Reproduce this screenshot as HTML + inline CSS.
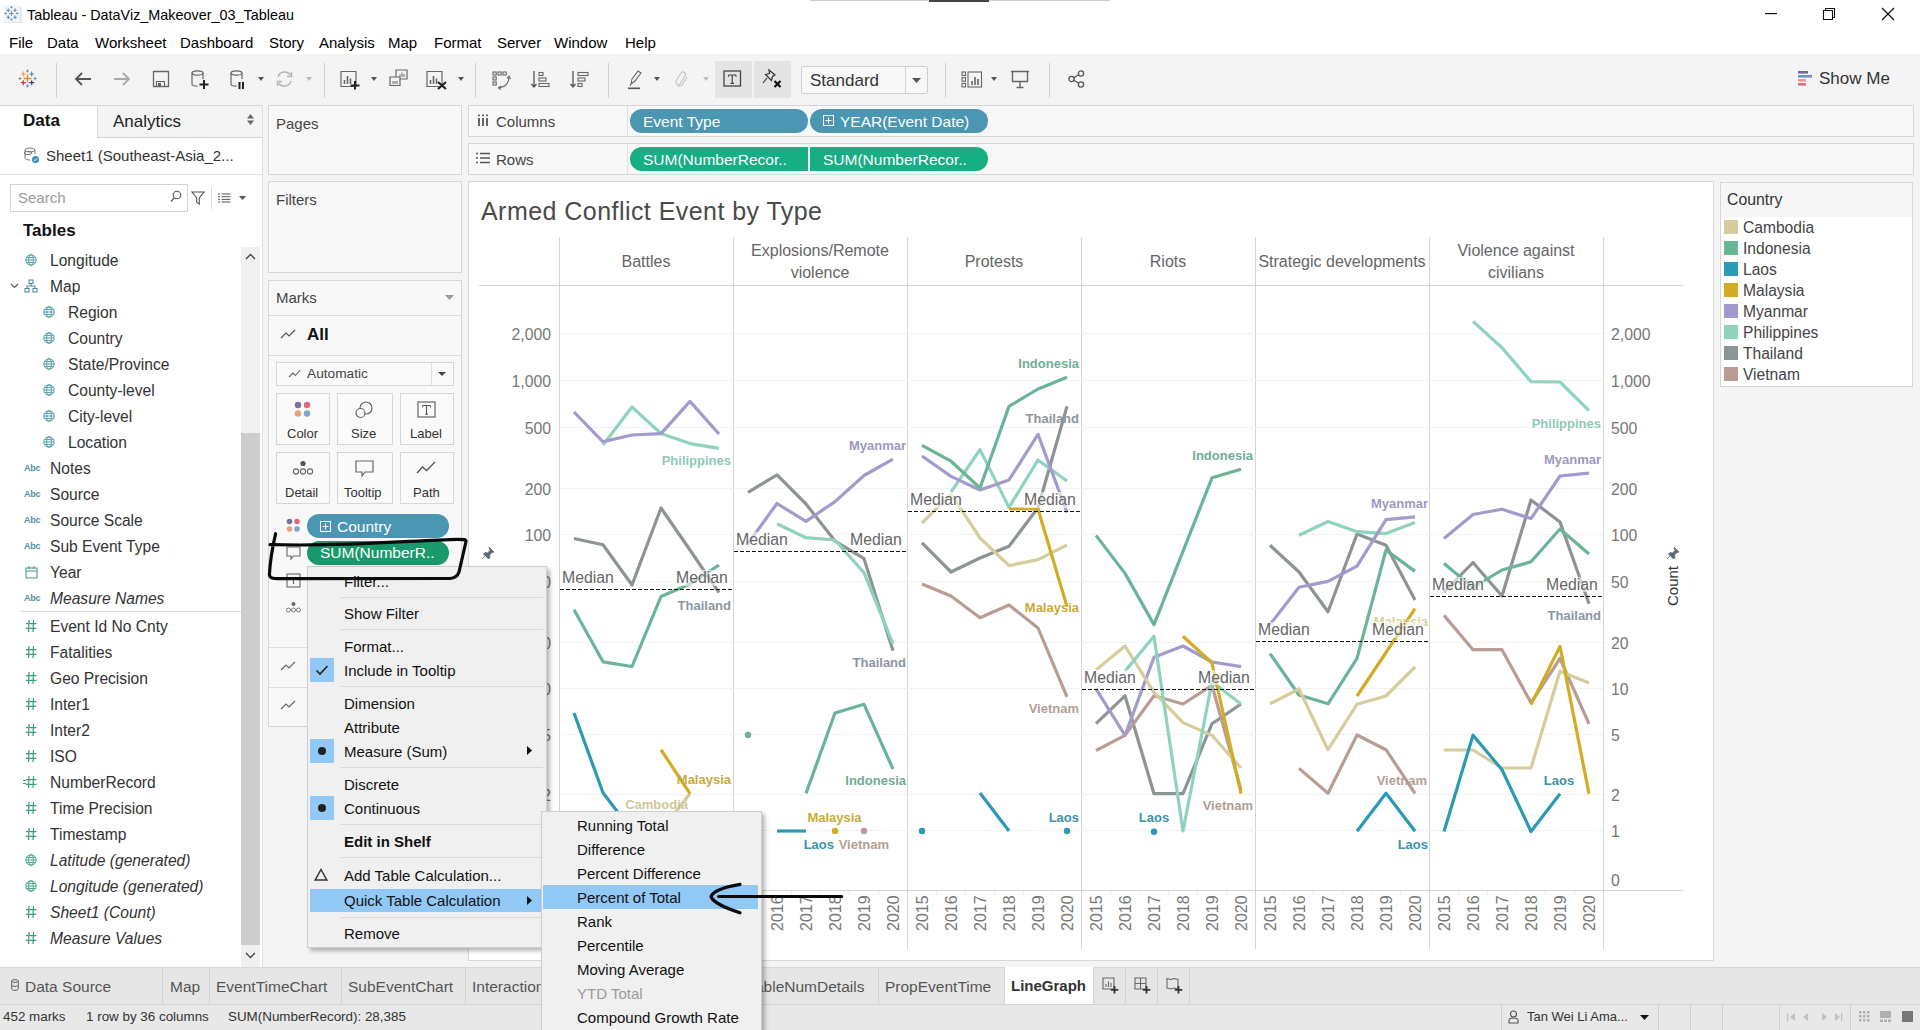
<!DOCTYPE html>
<html><head><meta charset="utf-8">
<style>
*{margin:0;padding:0;box-sizing:border-box;}
html,body{width:1920px;height:1030px;overflow:hidden;background:#f4f4f4;font-family:"Liberation Sans",sans-serif;color:#1a1a1a;}
.a{position:absolute;white-space:nowrap;}
.t{position:absolute;white-space:nowrap;line-height:1;}
svg{position:absolute;overflow:visible;}
.menu .t{font-size:15px;color:#000;}
.fld{font-size:15.6px;color:#333;}
.card{position:absolute;background:#f8f8f8;border:1px solid #d6d6d6;}
.pill{position:absolute;color:#fff;font-size:15px;line-height:23px;height:23px;}
.mi{position:absolute;font-size:15px;color:#111;line-height:1;}
.sep{position:absolute;height:1px;background:#d9d9d9;}
.ax{font-size:15.8px;color:#777;}
.yr{font-size:16px;color:#777;transform-origin:0 0;}
.lbl{font-size:13px;font-weight:bold;}
.tab{position:absolute;top:965px;height:40px;border-right:1px solid #d4d4d4;font-size:15.5px;color:#555;line-height:40px;}
</style></head><body>
<!-- title bar -->
<div class="a" style="left:0;top:0;width:1920px;height:54px;background:#fff;"></div>
<div class="a" style="left:810px;top:0;width:300px;height:1px;background:#d0d0d0;"></div>
<div class="a" style="left:929px;top:0;width:60px;height:2px;background:#444;"></div>
<svg style="left:3px;top:5px" width="20" height="20" viewBox="0 0 20 20">
<rect x="1.5" y="1.5" width="17" height="16.5" fill="#d4d4d4"/>
<rect x="0.5" y="0.5" width="17" height="17" fill="#f1f6fa"/>
<g stroke="#6690ab">
<path d="M8.4 6v4.8M6 8.4h4.8" stroke-width="1"/>
<path d="M5.3 3.5v3.6M3.5 5.3h3.6M12 3.5v3.6M10.2 5.3h3.6M5.3 10.4v3.6M3.5 12.2h3.6M12 10.4v3.6M10.2 12.2h3.6" stroke-width="1.1"/>
<path d="M8.4 1.2v2.2M7.3 2.3h2.2M8.4 13.4v2.2M7.3 14.5h2.2M1.5 8.4h2.2M2.6 7.3v2.2M13.1 8.4h2.2M14.2 7.3v2.2" stroke-width="1"/>
</g></svg>
<div class="t" style="left:27px;top:8px;font-size:14.4px;color:#000;">Tableau - DataViz_Makeover_03_Tableau</div>
<svg style="left:1765px;top:13px" width="12" height="2"><rect width="12" height="1.2" fill="#111"/></svg>
<svg style="left:1822px;top:7px" width="14" height="14" viewBox="0 0 14 14"><path d="M1.5 3.5h9v9h-9z M3.5 3.5v-2h9v9h-2" fill="none" stroke="#111" stroke-width="1.1"/></svg>
<svg style="left:1881px;top:7px" width="14" height="14" viewBox="0 0 14 14"><path d="M1 1L13 13M13 1L1 13" stroke="#111" stroke-width="1.2"/></svg>
<!-- menu -->
<div class="menu">
<div class="t" style="left:9px;top:35px;">File</div>
<div class="t" style="left:47px;top:35px;">Data</div>
<div class="t" style="left:95px;top:35px;">Worksheet</div>
<div class="t" style="left:180px;top:35px;">Dashboard</div>
<div class="t" style="left:269px;top:35px;">Story</div>
<div class="t" style="left:319px;top:35px;">Analysis</div>
<div class="t" style="left:388px;top:35px;">Map</div>
<div class="t" style="left:434px;top:35px;">Format</div>
<div class="t" style="left:497px;top:35px;">Server</div>
<div class="t" style="left:554px;top:35px;">Window</div>
<div class="t" style="left:625px;top:35px;">Help</div>
</div>
<!-- toolbar -->
<div class="a" style="left:0;top:54px;width:1920px;height:51px;background:#f4f4f4;"></div>
<div class="a" style="left:0;top:105px;width:262px;height:1px;background:#d6d6d6;"></div>
<svg style="left:17px;top:68px" width="22" height="22" viewBox="0 0 22 22">
<path d="M10.5 6.5v8M6.5 10.5h8" stroke="#e98a35" stroke-width="1.5"/>
<path d="M6.3 3.5v5M3.8 6h5" stroke="#eba54a" stroke-width="1.2"/>
<path d="M14.7 3.5v5M12.2 6h5" stroke="#5a8fa0" stroke-width="1.2"/>
<path d="M6.3 12.2v5M3.8 14.7h5" stroke="#c8344f" stroke-width="1.2"/>
<path d="M14.7 12.2v5M12.2 14.7h5" stroke="#27477a" stroke-width="1.2"/>
<path d="M10.5 1.5v3M9 3h3M10.5 16.5v3M9 18h3M1.5 10.5h3M3 9v3M16.5 10.5h3M18 9v3" stroke="#7a8fa3" stroke-width="1"/>
</svg>
<div class="a" style="left:56px;top:63px;width:1px;height:35px;background:#cfcfcf;"></div>
<svg style="left:74px;top:71px" width="18" height="16" viewBox="0 0 18 16"><path d="M17 8H2M8 2L2 8l6 6" fill="none" stroke="#555" stroke-width="1.8"/></svg>
<svg style="left:113px;top:71px" width="18" height="16" viewBox="0 0 18 16"><path d="M1 8h15M10 2l6 6-6 6" fill="none" stroke="#aaa" stroke-width="1.8"/></svg>
<svg style="left:152px;top:70px" width="18" height="18" viewBox="0 0 18 18"><path d="M1.5 1.5h15v15h-15z" fill="none" stroke="#666" stroke-width="1.3"/><path d="M4.5 16.5v-5h8v5" fill="none" stroke="#666" stroke-width="1.2"/><rect x="6" y="13" width="3" height="3" fill="#666"/></svg>
<svg style="left:191px;top:70px" width="18" height="20" viewBox="0 0 18 20"><ellipse cx="6.5" cy="3" rx="5.5" ry="2.2" fill="none" stroke="#666" stroke-width="1.2"/><path d="M1 3v11c0 1.2 2.5 2.2 5.5 2.2M12 3v6" fill="none" stroke="#666" stroke-width="1.2"/><path d="M13 10v9M8.5 14.5h9" stroke="#222" stroke-width="2"/></svg>
<svg style="left:230px;top:70px" width="16" height="20" viewBox="0 0 16 20"><ellipse cx="6.5" cy="3" rx="5.5" ry="2.2" fill="none" stroke="#666" stroke-width="1.2"/><path d="M1 3v11c0 1.2 2.5 2.2 5.5 2.2M12 3v6" fill="none" stroke="#666" stroke-width="1.2"/><path d="M9.5 12v7M13 12v7" stroke="#222" stroke-width="2"/></svg>
<svg style="left:258px;top:77px" width="6" height="4"><path d="M0 0h6L3 4z" fill="#555"/></svg>
<svg style="left:275px;top:70px" width="19" height="18" viewBox="0 0 19 18"><path d="M3 7a7 7 0 0 1 12.5-2M16 11a7 7 0 0 1-12.5 2" fill="none" stroke="#b5b5b5" stroke-width="1.4"/><path d="M16.5 2v4.5H12M2.5 16v-4.5H7" fill="none" stroke="#b5b5b5" stroke-width="1.4"/></svg>
<svg style="left:306px;top:77px" width="6" height="4"><path d="M0 0h6L3 4z" fill="#bbb"/></svg>
<div class="a" style="left:324px;top:63px;width:1px;height:35px;background:#cfcfcf;"></div>
<svg style="left:340px;top:70px" width="20" height="20" viewBox="0 0 20 20"><path d="M1 1.5h15v15H1z" fill="none" stroke="#666" stroke-width="1.2"/><path d="M4.5 14V10M7.5 14V6M10.5 14V8.5" stroke="#666" stroke-width="1.6"/><path d="M15 11v8.5M10.5 15.5h9" stroke="#222" stroke-width="2"/></svg>
<svg style="left:371px;top:77px" width="6" height="4"><path d="M0 0h6L3 4z" fill="#555"/></svg>
<svg style="left:389px;top:69px" width="20" height="18" viewBox="0 0 20 18"><path d="M7 1h11v9H7z" fill="#f4f4f4" stroke="#666" stroke-width="1.2"/><path d="M11 8V5.5M13 8V3.5M15 8V5" stroke="#666" stroke-width="1"/><path d="M1 8h10v8.5H1z" fill="#f4f4f4" stroke="#666" stroke-width="1.2"/><path d="M4 15v-3M6 15v-3M8 15v-3" stroke="#666" stroke-width="1"/></svg>
<svg style="left:426px;top:70px" width="22" height="20" viewBox="0 0 22 20"><path d="M1 1.5h15v15H1z" fill="none" stroke="#666" stroke-width="1.2"/><path d="M4.5 14V10M7.5 14V6M10.5 14V8.5" stroke="#666" stroke-width="1.6"/><path d="M12 12l8 7M20 12l-8 7" stroke="#222" stroke-width="2.1"/></svg>
<svg style="left:458px;top:77px" width="6" height="4"><path d="M0 0h6L3 4z" fill="#555"/></svg>
<div class="a" style="left:475px;top:63px;width:1px;height:35px;background:#cfcfcf;"></div>
<svg style="left:492px;top:71px" width="20" height="19" viewBox="0 0 20 19"><g fill="none" stroke="#666" stroke-width="1.1"><rect x="1" y="1" width="3.2" height="3"/><rect x="6" y="1" width="3.2" height="3"/><rect x="11" y="1" width="3.2" height="3"/><rect x="1" y="6" width="3.2" height="3"/><rect x="1" y="11" width="3.2" height="3"/><path d="M17 6c0 6-4 10-10 11"/><path d="M15 7.5l2-2.5 1.5 3M9 15l-2.5 2 2.5 1.5"/></g></svg>
<svg style="left:531px;top:71px" width="20" height="18" viewBox="0 0 20 18"><path d="M3 0v16M0.5 13l2.5 3 2.5-3" fill="none" stroke="#555" stroke-width="1.3"/><g fill="none" stroke="#666" stroke-width="1.1"><rect x="8" y="1.5" width="4" height="3"/><rect x="8" y="7" width="7" height="3"/><rect x="8" y="12.5" width="10" height="3"/></g></svg>
<svg style="left:570px;top:71px" width="20" height="18" viewBox="0 0 20 18"><path d="M3 0v16M0.5 13l2.5 3 2.5-3" fill="none" stroke="#555" stroke-width="1.3"/><g fill="none" stroke="#666" stroke-width="1.1"><rect x="8" y="1.5" width="10" height="3"/><rect x="8" y="7" width="7" height="3"/><rect x="8" y="12.5" width="4" height="3"/></g></svg>
<div class="a" style="left:608px;top:63px;width:1px;height:35px;background:#cfcfcf;"></div>
<svg style="left:627px;top:70px" width="16" height="20" viewBox="0 0 16 20"><path d="M4 14l1-5 6-8 3 2-6 8z" fill="none" stroke="#666" stroke-width="1.1"/><path d="M4 14l-1 2" stroke="#666"/><rect x="1" y="17.5" width="12" height="1.6" fill="#555"/></svg>
<svg style="left:654px;top:77px" width="6" height="4"><path d="M0 0h6L3 4z" fill="#555"/></svg>
<svg style="left:674px;top:70px" width="14" height="20" viewBox="0 0 14 20"><path d="M4 17L11 6a2.5 2.5 0 0 0-4-3L2 11a4 4 0 0 0 6 4l5-8" fill="none" stroke="#c5c5c5" stroke-width="1.2"/></svg>
<svg style="left:703px;top:77px" width="6" height="4"><path d="M0 0h6L3 4z" fill="#c0c0c0"/></svg>
<div class="a" style="left:715px;top:61px;width:37px;height:37px;background:#e4e4e4;"></div>
<svg style="left:723px;top:70px" width="19" height="18" viewBox="0 0 19 18"><rect x="1" y="1" width="16.5" height="15" fill="none" stroke="#444" stroke-width="1.3"/><path d="M5.5 5h7.5M9.2 5v8.5M7.5 13.3h3.5M5.5 5v1.8M13 5v1.8" stroke="#444" stroke-width="1.2" fill="none"/></svg>
<div class="a" style="left:754px;top:61px;width:37px;height:37px;background:#e4e4e4;"></div>
<svg style="left:762px;top:68px" width="22" height="22" viewBox="0 0 22 22"><path d="M7 2l6 5-2.5 1.5-1 4-6-6 4-1z M5 10l-4 5" fill="none" stroke="#333" stroke-width="1.2"/><path d="M12.5 13l6 6M18.5 13l-6 6" stroke="#111" stroke-width="2.2"/></svg>
<div class="a" style="left:801px;top:66px;width:127px;height:28px;background:#f8f8f8;border:1px solid #cfcfcf;border-radius:2px;"></div>
<div class="a" style="left:905px;top:67px;width:1px;height:26px;background:#d6d6d6;"></div>
<div class="t" style="left:810px;top:72px;font-size:17px;color:#333;">Standard</div>
<svg style="left:912px;top:78px" width="9" height="5"><path d="M0 0h9L4.5 5z" fill="#555"/></svg>
<div class="a" style="left:945px;top:63px;width:1px;height:35px;background:#cfcfcf;"></div>
<svg style="left:961px;top:71px" width="22" height="17" viewBox="0 0 22 17"><g fill="none" stroke="#666" stroke-width="1.1"><rect x="1" y="1" width="3.5" height="3.5"/><rect x="1" y="6.7" width="3.5" height="3.5"/><rect x="1" y="12.4" width="3.5" height="3.5"/><rect x="7" y="1" width="13.5" height="15"/></g><path d="M11 14v-4M14 14V6M17 14V8" stroke="#666" stroke-width="1.6"/></svg>
<svg style="left:991px;top:77px" width="6" height="4"><path d="M0 0h6L3 4z" fill="#555"/></svg>
<svg style="left:1010px;top:70px" width="20" height="19" viewBox="0 0 20 19"><path d="M1 1.5h18M2.5 1.5v10h15v-10M10 11.5v6M6.5 17.5h7" fill="none" stroke="#666" stroke-width="1.4"/></svg>
<div class="a" style="left:1049px;top:63px;width:1px;height:35px;background:#cfcfcf;"></div>
<svg style="left:1068px;top:70px" width="17" height="18" viewBox="0 0 17 18"><circle cx="3.5" cy="9" r="2.6" fill="none" stroke="#555" stroke-width="1.3"/><circle cx="13" cy="3.5" r="2.6" fill="none" stroke="#555" stroke-width="1.3"/><circle cx="13" cy="14.5" r="2.6" fill="none" stroke="#555" stroke-width="1.3"/><path d="M5.8 7.7l4.9-2.9M5.8 10.3l4.9 2.9" stroke="#555" stroke-width="1.3"/></svg>
<svg style="left:1797px;top:70px" width="16" height="17" viewBox="0 0 16 17"><rect x="1" y="1" width="10" height="2.6" fill="#6c6a9a"/><rect x="1" y="5" width="14" height="2.6" fill="#6f94c4"/><rect x="1" y="9" width="8" height="2.6" fill="#e79f8a"/><rect x="1" y="13" width="8" height="2.6" fill="#e36d7b"/></svg>
<div class="t" style="left:1819px;top:70px;font-size:17px;color:#333;">Show Me</div>

<div class="a" style="left:0;top:106px;width:262px;height:861px;background:#fff;"></div>
<div class="a" style="left:97px;top:106px;width:165px;height:32px;background:#f4f4f4;border-left:1px solid #d6d6d6;border-bottom:1px solid #d6d6d6;"></div>
<div class="t" style="left:23px;top:112px;font-size:17px;font-weight:bold;color:#111;">Data</div>
<div class="t" style="left:113px;top:113px;font-size:17px;color:#222;">Analytics</div>
<svg style="left:247px;top:114px" width="7" height="11"><path d="M0 4.5h7L3.5 0zM0 6.5h7L3.5 11z" fill="#666"/></svg>
<svg style="left:23px;top:147px" width="17" height="17" viewBox="0 0 17 17"><g fill="none" stroke="#777" stroke-width="1"><ellipse cx="7" cy="3" rx="5" ry="2"/><path d="M2 3v8c0 1 2 2 5 2M12 3v4"/><ellipse cx="5" cy="6" rx="4" ry="1.6"/></g><circle cx="12.5" cy="12.5" r="3.5" fill="#3b8fc0"/><path d="M10.8 12.5l1.2 1.2 2.2-2.2" stroke="#fff" stroke-width="1" fill="none"/></svg>
<div class="t" style="left:46px;top:148px;font-size:15px;color:#333;">Sheet1 (Southeast-Asia_2...</div>
<div class="a" style="left:0;top:174px;width:262px;height:1px;background:#e2e2e2;"></div>
<div class="a" style="left:10px;top:184px;width:178px;height:28px;border:1px solid #d4d4d4;background:#fff;"></div>
<div class="t" style="left:18px;top:190px;font-size:15px;color:#9a9a9a;">Search</div>
<svg style="left:170px;top:190px" width="12" height="13" viewBox="0 0 12 13"><circle cx="7" cy="5" r="3.8" fill="none" stroke="#555" stroke-width="1.1"/><path d="M4.3 7.8L1 11.5" stroke="#555" stroke-width="1.2"/></svg>
<svg style="left:191px;top:191px" width="14" height="14" viewBox="0 0 14 14"><path d="M1 1h12L8.3 7v6L5.7 11.5V7z" fill="none" stroke="#555" stroke-width="1.1"/></svg>
<div class="a" style="left:211px;top:187px;width:1px;height:22px;background:#ddd;"></div>
<svg style="left:218px;top:193px" width="13" height="10" viewBox="0 0 13 10"><g stroke="#555" stroke-width="1"><path d="M0 1h2M0 3.7h2M0 6.4h2M0 9h2M3.5 1h9M3.5 3.7h9M3.5 6.4h9M3.5 9h9"/></g></svg>
<svg style="left:239px;top:196px" width="7" height="4"><path d="M0 0h7L3.5 4z" fill="#555"/></svg>
<div class="t" style="left:23px;top:222px;font-size:17px;font-weight:bold;color:#111;">Tables</div>
<div class="a" style="left:241px;top:247px;width:19px;height:720px;background:#f0f0f0;"></div>
<div class="a" style="left:241px;top:433px;width:19px;height:512px;background:#cdcdcd;"></div>
<svg style="left:245px;top:253px" width="11" height="7"><path d="M1 6l4.5-4.5L10 6" fill="none" stroke="#444" stroke-width="1.4"/></svg>
<svg style="left:245px;top:952px" width="11" height="7"><path d="M1 1l4.5 4.5L10 1" fill="none" stroke="#444" stroke-width="1.4"/></svg>
<svg style="left:25px;top:254px" width="12" height="12" viewBox="0 0 12 12"><g fill="none" stroke="#5aa0a8" stroke-width="1"><circle cx="6" cy="6" r="5.2"/><ellipse cx="6" cy="6" rx="2.3" ry="5.2"/><path d="M0.8 6h10.4M1.5 3.4h9M1.5 8.6h9"/></g></svg>
<div class="t fld" style="left:50px;top:253px;">Longitude</div>
<svg style="left:10px;top:283px" width="9" height="6"><path d="M1 1l3.5 3.5L8 1" fill="none" stroke="#555" stroke-width="1.2"/></svg>
<svg style="left:24px;top:279px" width="14" height="14" viewBox="0 0 14 14"><g fill="none" stroke="#4f8fa0" stroke-width="1.1"><rect x="5" y="1" width="4" height="3.5"/><rect x="1" y="9.5" width="4" height="3.5"/><rect x="9" y="9.5" width="4" height="3.5"/><path d="M7 4.5v2.5M3 9.5V7h8v2.5"/></g></svg>
<div class="t fld" style="left:50px;top:279px;">Map</div>
<svg style="left:43px;top:306px" width="12" height="12" viewBox="0 0 12 12"><g fill="none" stroke="#5aa0a8" stroke-width="1"><circle cx="6" cy="6" r="5.2"/><ellipse cx="6" cy="6" rx="2.3" ry="5.2"/><path d="M0.8 6h10.4M1.5 3.4h9M1.5 8.6h9"/></g></svg>
<div class="t fld" style="left:68px;top:305px;">Region</div>
<svg style="left:43px;top:332px" width="12" height="12" viewBox="0 0 12 12"><g fill="none" stroke="#5aa0a8" stroke-width="1"><circle cx="6" cy="6" r="5.2"/><ellipse cx="6" cy="6" rx="2.3" ry="5.2"/><path d="M0.8 6h10.4M1.5 3.4h9M1.5 8.6h9"/></g></svg>
<div class="t fld" style="left:68px;top:331px;">Country</div>
<svg style="left:43px;top:358px" width="12" height="12" viewBox="0 0 12 12"><g fill="none" stroke="#5aa0a8" stroke-width="1"><circle cx="6" cy="6" r="5.2"/><ellipse cx="6" cy="6" rx="2.3" ry="5.2"/><path d="M0.8 6h10.4M1.5 3.4h9M1.5 8.6h9"/></g></svg>
<div class="t fld" style="left:68px;top:357px;">State/Province</div>
<svg style="left:43px;top:384px" width="12" height="12" viewBox="0 0 12 12"><g fill="none" stroke="#5aa0a8" stroke-width="1"><circle cx="6" cy="6" r="5.2"/><ellipse cx="6" cy="6" rx="2.3" ry="5.2"/><path d="M0.8 6h10.4M1.5 3.4h9M1.5 8.6h9"/></g></svg>
<div class="t fld" style="left:68px;top:383px;">County-level</div>
<svg style="left:43px;top:410px" width="12" height="12" viewBox="0 0 12 12"><g fill="none" stroke="#5aa0a8" stroke-width="1"><circle cx="6" cy="6" r="5.2"/><ellipse cx="6" cy="6" rx="2.3" ry="5.2"/><path d="M0.8 6h10.4M1.5 3.4h9M1.5 8.6h9"/></g></svg>
<div class="t fld" style="left:68px;top:409px;">City-level</div>
<svg style="left:43px;top:436px" width="12" height="12" viewBox="0 0 12 12"><g fill="none" stroke="#5aa0a8" stroke-width="1"><circle cx="6" cy="6" r="5.2"/><ellipse cx="6" cy="6" rx="2.3" ry="5.2"/><path d="M0.8 6h10.4M1.5 3.4h9M1.5 8.6h9"/></g></svg>
<div class="t fld" style="left:68px;top:435px;">Location</div>
<div class="t" style="left:24px;top:464px;font-size:9px;font-weight:bold;color:#5592a2;letter-spacing:-0.2px;">Abc</div>
<div class="t fld" style="left:50px;top:461px;">Notes</div>
<div class="t" style="left:24px;top:490px;font-size:9px;font-weight:bold;color:#5592a2;letter-spacing:-0.2px;">Abc</div>
<div class="t fld" style="left:50px;top:487px;">Source</div>
<div class="t" style="left:24px;top:516px;font-size:9px;font-weight:bold;color:#5592a2;letter-spacing:-0.2px;">Abc</div>
<div class="t fld" style="left:50px;top:513px;">Source Scale</div>
<div class="t" style="left:24px;top:542px;font-size:9px;font-weight:bold;color:#5592a2;letter-spacing:-0.2px;">Abc</div>
<div class="t fld" style="left:50px;top:539px;">Sub Event Type</div>
<svg style="left:25px;top:565px" width="13" height="14" viewBox="0 0 13 14"><path d="M1 3h11v10H1zM1 6h11M4 1v3M9 1v3" stroke="#4a9a8a" stroke-width="1.1" fill="none"/></svg>
<div class="t fld" style="left:50px;top:565px;">Year</div>
<div class="t" style="left:24px;top:594px;font-size:9px;font-weight:bold;color:#5592a2;letter-spacing:-0.2px;">Abc</div>
<div class="t fld" style="left:50px;top:591px;font-style:italic;">Measure Names</div>
<div class="a" style="left:20px;top:611px;width:221px;height:1px;background:#dcdcdc;"></div>
<svg style="left:25px;top:619px" width="12" height="14" viewBox="0 0 12 14"><path d="M4 1L3.5 13M8.5 1L8 13M1 4.7h10.5M0.8 9.3h10.5" stroke="#3e9b86" stroke-width="1.2" fill="none"/></svg>
<div class="t fld" style="left:50px;top:619px;">Event Id No Cnty</div>
<svg style="left:25px;top:645px" width="12" height="14" viewBox="0 0 12 14"><path d="M4 1L3.5 13M8.5 1L8 13M1 4.7h10.5M0.8 9.3h10.5" stroke="#3e9b86" stroke-width="1.2" fill="none"/></svg>
<div class="t fld" style="left:50px;top:645px;">Fatalities</div>
<svg style="left:25px;top:671px" width="12" height="14" viewBox="0 0 12 14"><path d="M4 1L3.5 13M8.5 1L8 13M1 4.7h10.5M0.8 9.3h10.5" stroke="#3e9b86" stroke-width="1.2" fill="none"/></svg>
<div class="t fld" style="left:50px;top:671px;">Geo Precision</div>
<svg style="left:25px;top:697px" width="12" height="14" viewBox="0 0 12 14"><path d="M4 1L3.5 13M8.5 1L8 13M1 4.7h10.5M0.8 9.3h10.5" stroke="#3e9b86" stroke-width="1.2" fill="none"/></svg>
<div class="t fld" style="left:50px;top:697px;">Inter1</div>
<svg style="left:25px;top:723px" width="12" height="14" viewBox="0 0 12 14"><path d="M4 1L3.5 13M8.5 1L8 13M1 4.7h10.5M0.8 9.3h10.5" stroke="#3e9b86" stroke-width="1.2" fill="none"/></svg>
<div class="t fld" style="left:50px;top:723px;">Inter2</div>
<svg style="left:25px;top:749px" width="12" height="14" viewBox="0 0 12 14"><path d="M4 1L3.5 13M8.5 1L8 13M1 4.7h10.5M0.8 9.3h10.5" stroke="#3e9b86" stroke-width="1.2" fill="none"/></svg>
<div class="t fld" style="left:50px;top:749px;">ISO</div>
<svg style="left:25px;top:775px" width="12" height="14" viewBox="0 0 12 14"><path d="M4 1L3.5 13M8.5 1L8 13M1 4.7h10.5M0.8 9.3h10.5" stroke="#3e9b86" stroke-width="1.2" fill="none"/></svg>
<div class="a" style="left:23px;top:780px;width:3px;height:1px;background:#3e9b86;"></div><div class="a" style="left:23px;top:783px;width:3px;height:1px;background:#3e9b86;"></div>
<div class="t fld" style="left:50px;top:775px;">NumberRecord</div>
<svg style="left:25px;top:801px" width="12" height="14" viewBox="0 0 12 14"><path d="M4 1L3.5 13M8.5 1L8 13M1 4.7h10.5M0.8 9.3h10.5" stroke="#3e9b86" stroke-width="1.2" fill="none"/></svg>
<div class="t fld" style="left:50px;top:801px;">Time Precision</div>
<svg style="left:25px;top:827px" width="12" height="14" viewBox="0 0 12 14"><path d="M4 1L3.5 13M8.5 1L8 13M1 4.7h10.5M0.8 9.3h10.5" stroke="#3e9b86" stroke-width="1.2" fill="none"/></svg>
<div class="t fld" style="left:50px;top:827px;">Timestamp</div>
<svg style="left:25px;top:854px" width="12" height="12" viewBox="0 0 12 12"><g fill="none" stroke="#4aa888" stroke-width="1"><circle cx="6" cy="6" r="5.2"/><ellipse cx="6" cy="6" rx="2.3" ry="5.2"/><path d="M0.8 6h10.4M1.5 3.4h9M1.5 8.6h9"/></g></svg>
<div class="t fld" style="left:50px;top:853px;font-style:italic;">Latitude (generated)</div>
<svg style="left:25px;top:880px" width="12" height="12" viewBox="0 0 12 12"><g fill="none" stroke="#4aa888" stroke-width="1"><circle cx="6" cy="6" r="5.2"/><ellipse cx="6" cy="6" rx="2.3" ry="5.2"/><path d="M0.8 6h10.4M1.5 3.4h9M1.5 8.6h9"/></g></svg>
<div class="t fld" style="left:50px;top:879px;font-style:italic;">Longitude (generated)</div>
<svg style="left:25px;top:905px" width="12" height="14" viewBox="0 0 12 14"><path d="M4 1L3.5 13M8.5 1L8 13M1 4.7h10.5M0.8 9.3h10.5" stroke="#3e9b86" stroke-width="1.2" fill="none"/></svg>
<div class="t fld" style="left:50px;top:905px;font-style:italic;">Sheet1 (Count)</div>
<svg style="left:25px;top:931px" width="12" height="14" viewBox="0 0 12 14"><path d="M4 1L3.5 13M8.5 1L8 13M1 4.7h10.5M0.8 9.3h10.5" stroke="#3e9b86" stroke-width="1.2" fill="none"/></svg>
<div class="t fld" style="left:50px;top:931px;font-style:italic;">Measure Values</div>
<div class="a" style="left:262px;top:106px;width:1px;height:861px;background:#e0e0e0;"></div><!-- middle cards -->
<div class="card" style="left:268px;top:105px;width:194px;height:70px;"></div>
<div class="t" style="left:276px;top:116px;font-size:15px;color:#444;">Pages</div>
<div class="card" style="left:268px;top:181px;width:194px;height:92px;"></div>
<div class="t" style="left:276px;top:192px;font-size:15px;color:#444;">Filters</div>
<div class="card" style="left:268px;top:280px;width:194px;height:447px;"></div>
<div class="t" style="left:276px;top:290px;font-size:15px;color:#444;">Marks</div>
<svg style="left:445px;top:295px" width="9" height="5"><path d="M0 0h9L4.5 5z" fill="#999"/></svg>
<div class="a" style="left:269px;top:315px;width:192px;height:1px;background:#dedede;"></div>
<svg style="left:280px;top:329px" width="16" height="10" viewBox="0 0 16 10"><path d="M1 9l5-5 3 3 6-6" fill="none" stroke="#555" stroke-width="1.2"/></svg>
<div class="t" style="left:307px;top:326px;font-size:17px;font-weight:bold;color:#111;">All</div>
<div class="a" style="left:269px;top:355px;width:192px;height:1px;background:#dedede;"></div>
<div class="a" style="left:276px;top:362px;width:178px;height:24px;border:1px solid #d6d6d6;background:#fafafa;"></div>
<div class="a" style="left:431px;top:363px;width:1px;height:22px;background:#dedede;"></div>
<svg style="left:288px;top:369px" width="13" height="9" viewBox="0 0 13 9"><path d="M1 8l4-4 2.5 2.5L12 1" fill="none" stroke="#666" stroke-width="1.1"/></svg>
<div class="t" style="left:307px;top:367px;font-size:13.7px;color:#444;">Automatic</div>
<svg style="left:438px;top:372px" width="8" height="4"><path d="M0 0h8L4 4z" fill="#444"/></svg>
<!-- mark buttons -->
<div class="a" style="left:276px;top:393px;width:54px;height:52px;border:1px solid #d6d6d6;background:#fafafa;"></div>
<div class="a" style="left:337px;top:393px;width:56px;height:52px;border:1px solid #d6d6d6;background:#fafafa;"></div>
<div class="a" style="left:400px;top:393px;width:54px;height:52px;border:1px solid #d6d6d6;background:#fafafa;"></div>
<div class="a" style="left:276px;top:452px;width:54px;height:52px;border:1px solid #d6d6d6;background:#fafafa;"></div>
<div class="a" style="left:337px;top:452px;width:56px;height:52px;border:1px solid #d6d6d6;background:#fafafa;"></div>
<div class="a" style="left:400px;top:452px;width:54px;height:52px;border:1px solid #d6d6d6;background:#fafafa;"></div>
<svg style="left:294px;top:401px" width="18" height="17" viewBox="0 0 18 17"><circle cx="4" cy="4" r="3.2" fill="#7e6d9d"/><circle cx="13" cy="4" r="3.2" fill="#e4667a"/><circle cx="4" cy="12.5" r="3.2" fill="#e8a27e"/><circle cx="13" cy="12.5" r="3.2" fill="#7ea6cf"/></svg>
<div class="t" style="left:287px;top:427px;font-size:13px;color:#333;">Color</div>
<svg style="left:355px;top:401px" width="19" height="18" viewBox="0 0 19 18"><circle cx="11" cy="7" r="6" fill="none" stroke="#666" stroke-width="1.2"/><circle cx="5.5" cy="12" r="4.5" fill="#fafafa" stroke="#666" stroke-width="1.2"/><path d="M5.5 12a4.5 4.5 0 0 1 4.5-4.5" fill="none"/></svg>
<div class="t" style="left:351px;top:427px;font-size:13px;color:#333;">Size</div>
<svg style="left:417px;top:401px" width="19" height="17" viewBox="0 0 19 17"><rect x="1" y="1" width="17" height="15" fill="none" stroke="#666" stroke-width="1.2"/><path d="M5.5 4.5h8M9.5 4.5v9M8 13.3h3M5.5 4.5v1.8M13.5 4.5v1.8" stroke="#555" stroke-width="1.1" fill="none"/></svg>
<div class="t" style="left:410px;top:427px;font-size:13px;color:#333;">Label</div>
<svg style="left:292px;top:460px" width="22" height="16" viewBox="0 0 22 16"><circle cx="11" cy="3.5" r="2.6" fill="#555"/><g fill="none" stroke="#666" stroke-width="1.1"><circle cx="4" cy="11.5" r="2.6"/><circle cx="11" cy="11.5" r="2.6"/><circle cx="18" cy="11.5" r="2.6"/></g></svg>
<div class="t" style="left:285px;top:486px;font-size:13px;color:#333;">Detail</div>
<svg style="left:355px;top:460px" width="19" height="18" viewBox="0 0 19 18"><path d="M1 1h17v11H10l-3 4v-4H1z" fill="none" stroke="#666" stroke-width="1.2"/></svg>
<div class="t" style="left:344px;top:486px;font-size:13px;color:#333;">Tooltip</div>
<svg style="left:416px;top:461px" width="20" height="14" viewBox="0 0 20 14"><path d="M1 12l5.5-6 4 3.5L19 1" fill="none" stroke="#555" stroke-width="1.3"/></svg>
<div class="t" style="left:413px;top:486px;font-size:13px;color:#333;">Path</div>
<!-- marks pills -->
<svg style="left:286px;top:518px" width="15" height="15" viewBox="0 0 15 15"><circle cx="3.5" cy="3.5" r="2.8" fill="#7e6d9d"/><circle cx="11" cy="3.5" r="2.8" fill="#e4667a"/><circle cx="3.5" cy="11" r="2.8" fill="#e8a27e"/><circle cx="11" cy="11" r="2.8" fill="#7ea6cf"/></svg>
<div class="pill" style="left:307px;top:514px;width:142px;height:24px;background:#4a96b3;border-radius:12px;"></div>
<svg style="left:320px;top:521px" width="11" height="11" viewBox="0 0 11 11"><rect x="0.5" y="0.5" width="10" height="10" fill="none" stroke="#fff"/><path d="M5.5 2.5v6M2.5 5.5h6" stroke="#fff"/></svg>
<div class="t" style="left:337px;top:519px;font-size:15.5px;color:#fff;">Country</div>
<svg style="left:286px;top:546px" width="15" height="15" viewBox="0 0 15 15"><path d="M1 1h13v9H7.5L5 13v-3H1z" fill="none" stroke="#666" stroke-width="1.1"/></svg>
<div class="pill" style="left:307px;top:541px;width:142px;height:24px;background:#1a9a6c;border-radius:12px;"></div>
<div class="t" style="left:320px;top:545px;font-size:15.5px;color:#fff;">SUM(NumberR..</div>
<!-- hidden rows under menu -->
<svg style="left:286px;top:573px" width="15" height="15" viewBox="0 0 15 15"><rect x="1" y="1" width="13" height="13" fill="none" stroke="#666" stroke-width="1.1"/><path d="M4 4.5h7M7.5 4.5v6.5" stroke="#666" stroke-width="1.1"/></svg>
<svg style="left:286px;top:601px" width="15" height="12" viewBox="0 0 15 12"><circle cx="7.5" cy="3" r="2" fill="#666"/><g fill="none" stroke="#777" stroke-width="1"><circle cx="2.5" cy="9" r="2"/><circle cx="7.5" cy="9" r="2"/><circle cx="12.5" cy="9" r="2"/></g></svg>
<div class="a" style="left:269px;top:647px;width:192px;height:1px;background:#dedede;"></div>
<svg style="left:280px;top:661px" width="16" height="10" viewBox="0 0 16 10"><path d="M1 9l5-5 3 3 6-6" fill="none" stroke="#666" stroke-width="1.2"/></svg>
<div class="a" style="left:269px;top:687px;width:192px;height:1px;background:#dedede;"></div>
<svg style="left:280px;top:700px" width="16" height="10" viewBox="0 0 16 10"><path d="M1 9l5-5 3 3 6-6" fill="none" stroke="#666" stroke-width="1.2"/></svg>
<!-- shelves -->
<div class="card" style="left:468px;top:105px;width:1446px;height:32px;"></div>
<div class="a" style="left:627px;top:106px;width:1px;height:30px;background:#e0e0e0;"></div>
<svg style="left:477px;top:114px" width="12" height="12" viewBox="0 0 12 12"><path d="M2 4v8M6 4v8M10 4v8" stroke="#555" stroke-width="1.8"/><path d="M2 0.5v1.8M6 0.5v1.8M10 0.5v1.8" stroke="#555" stroke-width="1.8"/></svg>
<div class="t" style="left:496px;top:114px;font-size:15px;color:#444;">Columns</div>
<div class="pill" style="left:630px;top:109px;width:178px;height:24px;background:#4a96b3;border-radius:12px;"></div>
<div class="t" style="left:643px;top:114px;font-size:15.5px;color:#fff;">Event Type</div>
<div class="pill" style="left:810px;top:109px;width:178px;height:24px;background:#4a96b3;border-radius:12px;"></div>
<svg style="left:823px;top:115px" width="11" height="11" viewBox="0 0 11 11"><rect x="0.5" y="0.5" width="10" height="10" fill="none" stroke="#fff"/><path d="M5.5 2.5v6M2.5 5.5h6" stroke="#fff"/></svg>
<div class="t" style="left:840px;top:114px;font-size:15.5px;color:#fff;">YEAR(Event Date)</div>
<div class="card" style="left:468px;top:143px;width:1446px;height:32px;"></div>
<div class="a" style="left:627px;top:144px;width:1px;height:30px;background:#e0e0e0;"></div>
<svg style="left:476px;top:152px" width="14" height="12" viewBox="0 0 14 12"><path d="M0 1.5h2M0 6h2M0 10.5h2M4 1.5h10M4 6h10M4 10.5h10" stroke="#555" stroke-width="1.5"/></svg>
<div class="t" style="left:496px;top:152px;font-size:15px;color:#444;">Rows</div>
<div class="pill" style="left:630px;top:147px;width:178px;height:24px;background:#16ae83;border-radius:12px 0 0 12px;"></div>
<div class="t" style="left:643px;top:152px;font-size:15.5px;color:#fff;">SUM(NumberRecor..</div>
<div class="pill" style="left:810px;top:147px;width:178px;height:24px;background:#16ae83;border-radius:0 12px 12px 0;"></div>
<div class="t" style="left:823px;top:152px;font-size:15.5px;color:#fff;">SUM(NumberRecor..</div>
<div class="a" style="left:468px;top:181px;width:1246px;height:780px;background:#fff;border:1px solid #d6d6d6;"></div>
<div class="t" style="left:481px;top:199px;font-size:25px;letter-spacing:0.45px;color:#4a4a4a;">Armed Conflict Event by Type</div>
<svg style="left:0;top:0" width="1920" height="1030">
<line x1="559.5" y1="237" x2="559.5" y2="949" stroke="#d4d4d4" stroke-width="1"/>
<line x1="733.5" y1="237" x2="733.5" y2="949" stroke="#d4d4d4" stroke-width="1"/>
<line x1="907.5" y1="237" x2="907.5" y2="949" stroke="#d4d4d4" stroke-width="1"/>
<line x1="1081.5" y1="237" x2="1081.5" y2="949" stroke="#d4d4d4" stroke-width="1"/>
<line x1="1255.5" y1="237" x2="1255.5" y2="949" stroke="#d4d4d4" stroke-width="1"/>
<line x1="1429.5" y1="237" x2="1429.5" y2="949" stroke="#d4d4d4" stroke-width="1"/>
<line x1="1603.5" y1="237" x2="1603.5" y2="949" stroke="#d4d4d4" stroke-width="1"/>
<line x1="479" y1="285.5" x2="1683" y2="285.5" stroke="#d4d4d4"/>
<line x1="479" y1="890.5" x2="1683" y2="890.5" stroke="#d4d4d4"/>
<line x1="560" y1="333.5" x2="1603" y2="333.5" stroke="#f2f2f2"/>
<line x1="560" y1="380.5" x2="1603" y2="380.5" stroke="#f2f2f2"/>
<line x1="560" y1="427.5" x2="1603" y2="427.5" stroke="#f2f2f2"/>
<line x1="560" y1="488.5" x2="1603" y2="488.5" stroke="#f2f2f2"/>
<line x1="560" y1="534.5" x2="1603" y2="534.5" stroke="#f2f2f2"/>
<line x1="560" y1="581.5" x2="1603" y2="581.5" stroke="#f2f2f2"/>
<line x1="560" y1="642.5" x2="1603" y2="642.5" stroke="#f2f2f2"/>
<line x1="560" y1="688.5" x2="1603" y2="688.5" stroke="#f2f2f2"/>
<line x1="560" y1="734.5" x2="1603" y2="734.5" stroke="#f2f2f2"/>
<line x1="560" y1="794.5" x2="1603" y2="794.5" stroke="#f2f2f2"/>
<line x1="560" y1="830.5" x2="1603" y2="830.5" stroke="#f2f2f2"/>
<line x1="588.5" y1="891" x2="588.5" y2="895" stroke="#eeeeee"/>
<line x1="617.5" y1="891" x2="617.5" y2="895" stroke="#eeeeee"/>
<line x1="646.5" y1="891" x2="646.5" y2="895" stroke="#eeeeee"/>
<line x1="675.5" y1="891" x2="675.5" y2="895" stroke="#eeeeee"/>
<line x1="704.5" y1="891" x2="704.5" y2="895" stroke="#eeeeee"/>
<line x1="762.5" y1="891" x2="762.5" y2="895" stroke="#eeeeee"/>
<line x1="791.5" y1="891" x2="791.5" y2="895" stroke="#eeeeee"/>
<line x1="820.5" y1="891" x2="820.5" y2="895" stroke="#eeeeee"/>
<line x1="849.5" y1="891" x2="849.5" y2="895" stroke="#eeeeee"/>
<line x1="878.5" y1="891" x2="878.5" y2="895" stroke="#eeeeee"/>
<line x1="936.5" y1="891" x2="936.5" y2="895" stroke="#eeeeee"/>
<line x1="965.5" y1="891" x2="965.5" y2="895" stroke="#eeeeee"/>
<line x1="994.5" y1="891" x2="994.5" y2="895" stroke="#eeeeee"/>
<line x1="1023.5" y1="891" x2="1023.5" y2="895" stroke="#eeeeee"/>
<line x1="1052.5" y1="891" x2="1052.5" y2="895" stroke="#eeeeee"/>
<line x1="1110.5" y1="891" x2="1110.5" y2="895" stroke="#eeeeee"/>
<line x1="1139.5" y1="891" x2="1139.5" y2="895" stroke="#eeeeee"/>
<line x1="1168.5" y1="891" x2="1168.5" y2="895" stroke="#eeeeee"/>
<line x1="1197.5" y1="891" x2="1197.5" y2="895" stroke="#eeeeee"/>
<line x1="1226.5" y1="891" x2="1226.5" y2="895" stroke="#eeeeee"/>
<line x1="1284.5" y1="891" x2="1284.5" y2="895" stroke="#eeeeee"/>
<line x1="1313.5" y1="891" x2="1313.5" y2="895" stroke="#eeeeee"/>
<line x1="1342.5" y1="891" x2="1342.5" y2="895" stroke="#eeeeee"/>
<line x1="1371.5" y1="891" x2="1371.5" y2="895" stroke="#eeeeee"/>
<line x1="1400.5" y1="891" x2="1400.5" y2="895" stroke="#eeeeee"/>
<line x1="1458.5" y1="891" x2="1458.5" y2="895" stroke="#eeeeee"/>
<line x1="1487.5" y1="891" x2="1487.5" y2="895" stroke="#eeeeee"/>
<line x1="1516.5" y1="891" x2="1516.5" y2="895" stroke="#eeeeee"/>
<line x1="1545.5" y1="891" x2="1545.5" y2="895" stroke="#eeeeee"/>
<line x1="1574.5" y1="891" x2="1574.5" y2="895" stroke="#eeeeee"/>
<polyline points="574,538.5 603,544.8 632,585 661,508 690,550 719,592.6" fill="none" stroke="#8d9495" stroke-width="3.2" stroke-linejoin="round" stroke-linecap="butt"/>
<polyline points="574,609.8 603,661.8 632,666.5 661,596.5 690,584 719,565" fill="none" stroke="#6bb494" stroke-width="3.2" stroke-linejoin="round" stroke-linecap="butt"/>
<polyline points="574,713 603,792.8 632,831" fill="none" stroke="#2c9ab4" stroke-width="3.2" stroke-linejoin="round" stroke-linecap="butt"/>
<polyline points="661,831 690,793.6" fill="none" stroke="#d5cd9c" stroke-width="3.2" stroke-linejoin="round" stroke-linecap="butt"/>
<polyline points="661,749.7 690,793.6" fill="none" stroke="#d2ac24" stroke-width="3.2" stroke-linejoin="round" stroke-linecap="butt"/>
<polyline points="603,445 632,407 661,433.6 690,443.6 719,448.3" fill="none" stroke="#8fd2be" stroke-width="3.2" stroke-linejoin="round" stroke-linecap="butt"/>
<polyline points="574,412 603,441.8 632,435 661,433.6 690,401.4 719,434" fill="none" stroke="#a29bce" stroke-width="3.2" stroke-linejoin="round" stroke-linecap="butt"/>
<line x1="560" y1="589.5" x2="732" y2="589.5" stroke="#111" stroke-width="1" stroke-dasharray="4 2"/>
<polyline points="748,492.3 777,474.8 806,504 835,541 864,558.7 893,650.8" fill="none" stroke="#8d9495" stroke-width="3.2" stroke-linejoin="round" stroke-linecap="butt"/>
<polyline points="777,523.7 806,537.7 835,540 864,572.7 893,643.8" fill="none" stroke="#8fd2be" stroke-width="3.2" stroke-linejoin="round" stroke-linecap="butt"/>
<polyline points="748,543.5 777,503.5 806,521.4 835,501.6 864,475.5 893,459.2" fill="none" stroke="#a29bce" stroke-width="3.2" stroke-linejoin="round" stroke-linecap="butt"/>
<circle cx="748" cy="735" r="3.2" fill="#6bb494"/>
<polyline points="806,793.4 835,713 864,704.3 893,769" fill="none" stroke="#6bb494" stroke-width="3.2" stroke-linejoin="round" stroke-linecap="butt"/>
<polyline points="777,831 806,831" fill="none" stroke="#2c9ab4" stroke-width="3.2" stroke-linejoin="round" stroke-linecap="butt"/>
<circle cx="835" cy="831" r="3.2" fill="#d2ac24"/>
<circle cx="864" cy="831" r="3.2" fill="#b99d94"/>
<line x1="734" y1="551.5" x2="906" y2="551.5" stroke="#111" stroke-width="1" stroke-dasharray="4 2"/>
<polyline points="922,584 951,596 980,617.8 1009,605 1038,628 1067,696.8" fill="none" stroke="#b99d94" stroke-width="3.2" stroke-linejoin="round" stroke-linecap="butt"/>
<polyline points="922,542.8 951,572 980,558 1009,546.3 1038,507.8 1067,406.4" fill="none" stroke="#8d9495" stroke-width="3.2" stroke-linejoin="round" stroke-linecap="butt"/>
<polyline points="922,523 951,493.9 980,538 1009,565.6 1038,559.6 1067,545" fill="none" stroke="#d5cd9c" stroke-width="3.2" stroke-linejoin="round" stroke-linecap="butt"/>
<polyline points="951,492 980,449.6 1009,507.4 1038,460 1067,481" fill="none" stroke="#8fd2be" stroke-width="3.2" stroke-linejoin="round" stroke-linecap="butt"/>
<polyline points="922,456 951,476.4 980,490 1009,480 1038,434.4 1067,512.5" fill="none" stroke="#a29bce" stroke-width="3.2" stroke-linejoin="round" stroke-linecap="butt"/>
<polyline points="922,445.4 951,461.2 980,488 1009,406.4 1038,389 1067,377.3" fill="none" stroke="#6bb494" stroke-width="3.2" stroke-linejoin="round" stroke-linecap="butt"/>
<polyline points="1009,509 1038,509 1067,606.6" fill="none" stroke="#d2ac24" stroke-width="3.2" stroke-linejoin="round" stroke-linecap="butt"/>
<circle cx="922" cy="831" r="3.2" fill="#2c9ab4"/>
<polyline points="980,793 1009,831" fill="none" stroke="#2c9ab4" stroke-width="3.2" stroke-linejoin="round" stroke-linecap="butt"/>
<circle cx="1067" cy="831" r="3.2" fill="#2c9ab4"/>
<line x1="908" y1="511.5" x2="1080" y2="511.5" stroke="#111" stroke-width="1" stroke-dasharray="4 2"/>
<polyline points="1096,535.4 1125,573.4 1154,624.6 1183,551.4 1212,477.8 1241,469.2" fill="none" stroke="#6bb494" stroke-width="3.2" stroke-linejoin="round" stroke-linecap="butt"/>
<polyline points="1096,723.7 1125,695.8 1154,793.7 1183,793.7 1212,723.7 1241,704" fill="none" stroke="#8d9495" stroke-width="3.2" stroke-linejoin="round" stroke-linecap="butt"/>
<polyline points="1096,750.5 1125,735.4 1154,695.8 1183,704 1212,685.3 1241,790" fill="none" stroke="#b99d94" stroke-width="3.2" stroke-linejoin="round" stroke-linecap="butt"/>
<polyline points="1096,688.8 1125,735.4 1154,657.3 1183,646 1212,662 1241,666.6" fill="none" stroke="#a29bce" stroke-width="3.2" stroke-linejoin="round" stroke-linecap="butt"/>
<polyline points="1096,670 1125,646 1154,692.3 1183,722.6 1212,735.4 1241,768" fill="none" stroke="#d5cd9c" stroke-width="3.2" stroke-linejoin="round" stroke-linecap="butt"/>
<polyline points="1125,671.3 1154,636.3 1183,831 1212,681.8 1241,704" fill="none" stroke="#8fd2be" stroke-width="3.2" stroke-linejoin="round" stroke-linecap="butt"/>
<polyline points="1183,636.3 1212,663 1241,793.7" fill="none" stroke="#d2ac24" stroke-width="3.2" stroke-linejoin="round" stroke-linecap="butt"/>
<circle cx="1154" cy="831.7" r="3.2" fill="#2c9ab4"/>
<line x1="1082" y1="689.5" x2="1254" y2="689.5" stroke="#111" stroke-width="1" stroke-dasharray="4 2"/>
<polyline points="1270,545.3 1299,572 1328,611.7 1357,534 1386,545.3 1415,600" fill="none" stroke="#8d9495" stroke-width="3.2" stroke-linejoin="round" stroke-linecap="butt"/>
<polyline points="1270,653.7 1299,695 1328,703.8 1357,658.3 1386,550 1415,571.4" fill="none" stroke="#6bb494" stroke-width="3.2" stroke-linejoin="round" stroke-linecap="butt"/>
<polyline points="1299,535.2 1328,521.5 1357,531.7 1386,533.6 1415,522.4" fill="none" stroke="#8fd2be" stroke-width="3.2" stroke-linejoin="round" stroke-linecap="butt"/>
<polyline points="1270,624.5 1299,587.2 1328,581.4 1357,566.2 1386,519.6 1415,516.8" fill="none" stroke="#a29bce" stroke-width="3.2" stroke-linejoin="round" stroke-linecap="butt"/>
<polyline points="1270,703.8 1299,689 1328,749.7 1357,704.3 1386,696 1415,667" fill="none" stroke="#d5cd9c" stroke-width="3.2" stroke-linejoin="round" stroke-linecap="butt"/>
<polyline points="1357,696 1386,652.5 1415,608.7" fill="none" stroke="#d2ac24" stroke-width="3.2" stroke-linejoin="round" stroke-linecap="butt"/>
<polyline points="1299,768.4 1328,793.3 1357,735 1386,749.7 1415,793.3" fill="none" stroke="#b99d94" stroke-width="3.2" stroke-linejoin="round" stroke-linecap="butt"/>
<polyline points="1357,831.3 1386,793.3 1415,831.3" fill="none" stroke="#2c9ab4" stroke-width="3.2" stroke-linejoin="round" stroke-linecap="butt"/>
<line x1="1256" y1="641.5" x2="1428" y2="641.5" stroke="#111" stroke-width="1" stroke-dasharray="4 2"/>
<polyline points="1473,321.4 1502,347.8 1531,381.6 1560,382 1589,410.7" fill="none" stroke="#8fd2be" stroke-width="3.2" stroke-linejoin="round" stroke-linecap="butt"/>
<polyline points="1444,592 1473,562.5 1502,596 1531,500 1560,522 1589,603.7" fill="none" stroke="#8d9495" stroke-width="3.2" stroke-linejoin="round" stroke-linecap="butt"/>
<polyline points="1444,563.4 1473,587.4 1502,570 1531,561.8 1560,529 1589,554" fill="none" stroke="#6bb494" stroke-width="3.2" stroke-linejoin="round" stroke-linecap="butt"/>
<polyline points="1444,538.5 1473,514.5 1502,509.3 1531,518.6 1560,476 1589,473.2" fill="none" stroke="#a29bce" stroke-width="3.2" stroke-linejoin="round" stroke-linecap="butt"/>
<polyline points="1444,615.4 1473,649.7 1502,649.7 1531,702.8 1560,658.5 1589,723.8" fill="none" stroke="#b99d94" stroke-width="3.2" stroke-linejoin="round" stroke-linecap="butt"/>
<polyline points="1444,750 1473,750 1502,768 1531,768 1560,671.3 1589,683" fill="none" stroke="#d5cd9c" stroke-width="3.2" stroke-linejoin="round" stroke-linecap="butt"/>
<polyline points="1531,704.6 1560,646.4 1589,793.8" fill="none" stroke="#d2ac24" stroke-width="3.2" stroke-linejoin="round" stroke-linecap="butt"/>
<polyline points="1444,831.5 1473,735.2 1502,769.7 1531,831.5 1560,793.8" fill="none" stroke="#2c9ab4" stroke-width="3.2" stroke-linejoin="round" stroke-linecap="butt"/>
<line x1="1430" y1="596.5" x2="1602" y2="596.5" stroke="#111" stroke-width="1" stroke-dasharray="4 2"/>
</svg>
<div class="t" style="left:559px;width:174px;text-align:center;top:254px;font-size:16px;color:#666;">Battles</div>
<div class="t" style="left:733px;width:174px;text-align:center;top:243px;font-size:16px;color:#666;">Explosions/Remote</div>
<div class="t" style="left:733px;width:174px;text-align:center;top:265px;font-size:16px;color:#666;">violence</div>
<div class="t" style="left:907px;width:174px;text-align:center;top:254px;font-size:16px;color:#666;">Protests</div>
<div class="t" style="left:1081px;width:174px;text-align:center;top:254px;font-size:16px;color:#666;">Riots</div>
<div class="t" style="left:1255px;width:174px;text-align:center;top:254px;font-size:16px;color:#666;">Strategic developments</div>
<div class="t" style="left:1429px;width:174px;text-align:center;top:243px;font-size:16px;color:#666;">Violence against</div>
<div class="t" style="left:1429px;width:174px;text-align:center;top:265px;font-size:16px;color:#666;">civilians</div>
<div class="t ax" style="left:480px;width:71px;text-align:right;top:327px;">2,000</div>
<div class="t ax" style="left:1611px;top:327px;">2,000</div>
<div class="t ax" style="left:480px;width:71px;text-align:right;top:374px;">1,000</div>
<div class="t ax" style="left:1611px;top:374px;">1,000</div>
<div class="t ax" style="left:480px;width:71px;text-align:right;top:421px;">500</div>
<div class="t ax" style="left:1611px;top:421px;">500</div>
<div class="t ax" style="left:480px;width:71px;text-align:right;top:482px;">200</div>
<div class="t ax" style="left:1611px;top:482px;">200</div>
<div class="t ax" style="left:480px;width:71px;text-align:right;top:528px;">100</div>
<div class="t ax" style="left:1611px;top:528px;">100</div>
<div class="t ax" style="left:480px;width:71px;text-align:right;top:575px;">50</div>
<div class="t ax" style="left:1611px;top:575px;">50</div>
<div class="t ax" style="left:480px;width:71px;text-align:right;top:636px;">20</div>
<div class="t ax" style="left:1611px;top:636px;">20</div>
<div class="t ax" style="left:480px;width:71px;text-align:right;top:682px;">10</div>
<div class="t ax" style="left:1611px;top:682px;">10</div>
<div class="t ax" style="left:480px;width:71px;text-align:right;top:728px;">5</div>
<div class="t ax" style="left:1611px;top:728px;">5</div>
<div class="t ax" style="left:480px;width:71px;text-align:right;top:788px;">2</div>
<div class="t ax" style="left:1611px;top:788px;">2</div>
<div class="t ax" style="left:480px;width:71px;text-align:right;top:824px;">1</div>
<div class="t ax" style="left:1611px;top:824px;">1</div>
<div class="t ax" style="left:480px;width:71px;text-align:right;top:873px;">0</div>
<div class="t ax" style="left:1611px;top:873px;">0</div>
<div class="t yr" style="left:567px;top:931px;transform:rotate(-90deg);">2015</div>
<div class="t yr" style="left:596px;top:931px;transform:rotate(-90deg);">2016</div>
<div class="t yr" style="left:625px;top:931px;transform:rotate(-90deg);">2017</div>
<div class="t yr" style="left:654px;top:931px;transform:rotate(-90deg);">2018</div>
<div class="t yr" style="left:683px;top:931px;transform:rotate(-90deg);">2019</div>
<div class="t yr" style="left:712px;top:931px;transform:rotate(-90deg);">2020</div>
<div class="t yr" style="left:741px;top:931px;transform:rotate(-90deg);">2015</div>
<div class="t yr" style="left:770px;top:931px;transform:rotate(-90deg);">2016</div>
<div class="t yr" style="left:799px;top:931px;transform:rotate(-90deg);">2017</div>
<div class="t yr" style="left:828px;top:931px;transform:rotate(-90deg);">2018</div>
<div class="t yr" style="left:857px;top:931px;transform:rotate(-90deg);">2019</div>
<div class="t yr" style="left:886px;top:931px;transform:rotate(-90deg);">2020</div>
<div class="t yr" style="left:915px;top:931px;transform:rotate(-90deg);">2015</div>
<div class="t yr" style="left:944px;top:931px;transform:rotate(-90deg);">2016</div>
<div class="t yr" style="left:973px;top:931px;transform:rotate(-90deg);">2017</div>
<div class="t yr" style="left:1002px;top:931px;transform:rotate(-90deg);">2018</div>
<div class="t yr" style="left:1031px;top:931px;transform:rotate(-90deg);">2019</div>
<div class="t yr" style="left:1060px;top:931px;transform:rotate(-90deg);">2020</div>
<div class="t yr" style="left:1089px;top:931px;transform:rotate(-90deg);">2015</div>
<div class="t yr" style="left:1118px;top:931px;transform:rotate(-90deg);">2016</div>
<div class="t yr" style="left:1147px;top:931px;transform:rotate(-90deg);">2017</div>
<div class="t yr" style="left:1176px;top:931px;transform:rotate(-90deg);">2018</div>
<div class="t yr" style="left:1205px;top:931px;transform:rotate(-90deg);">2019</div>
<div class="t yr" style="left:1234px;top:931px;transform:rotate(-90deg);">2020</div>
<div class="t yr" style="left:1263px;top:931px;transform:rotate(-90deg);">2015</div>
<div class="t yr" style="left:1292px;top:931px;transform:rotate(-90deg);">2016</div>
<div class="t yr" style="left:1321px;top:931px;transform:rotate(-90deg);">2017</div>
<div class="t yr" style="left:1350px;top:931px;transform:rotate(-90deg);">2018</div>
<div class="t yr" style="left:1379px;top:931px;transform:rotate(-90deg);">2019</div>
<div class="t yr" style="left:1408px;top:931px;transform:rotate(-90deg);">2020</div>
<div class="t yr" style="left:1437px;top:931px;transform:rotate(-90deg);">2015</div>
<div class="t yr" style="left:1466px;top:931px;transform:rotate(-90deg);">2016</div>
<div class="t yr" style="left:1495px;top:931px;transform:rotate(-90deg);">2017</div>
<div class="t yr" style="left:1524px;top:931px;transform:rotate(-90deg);">2018</div>
<div class="t yr" style="left:1553px;top:931px;transform:rotate(-90deg);">2019</div>
<div class="t yr" style="left:1582px;top:931px;transform:rotate(-90deg);">2020</div>
<div class="t" style="left:1665px;top:606px;font-size:15px;color:#333;transform-origin:0 0;transform:rotate(-90deg);">Count</div>
<svg style="left:1666px;top:546px" width="14" height="14" viewBox="0 0 14 14"><path d="M8 1l5 5-2 .5-2.5 2.5.5 2.5-1.5 1.5L2.5 8 4 6.5l2.5.5L9 4.5z M4.5 9.5L1 13" fill="#5f6a78" stroke="#5f6a78" stroke-width="0.8"/></svg>
<svg style="left:481px;top:546px" width="14" height="14" viewBox="0 0 14 14"><path d="M8 1l5 5-2 .5-2.5 2.5.5 2.5-1.5 1.5L2.5 8 4 6.5l2.5.5L9 4.5z M4.5 9.5L1 13" fill="#5f6a78" stroke="#5f6a78" stroke-width="0.8"/></svg>
<div class="a" style="left:1720px;top:182px;width:193px;height:205px;background:#fff;border:1px solid #d6d6d6;"></div>
<div class="a" style="left:1721px;top:183px;width:191px;height:34px;background:#f6f6f6;"></div>
<div class="t" style="left:1727px;top:192px;font-size:15.8px;color:#333;">Country</div>
<div class="a" style="left:1724px;top:220px;width:14px;height:14px;background:#d5cd9b;"></div>
<div class="t" style="left:1743px;top:220px;font-size:15.6px;color:#444;">Cambodia</div>
<div class="a" style="left:1724px;top:241px;width:14px;height:14px;background:#6ab594;"></div>
<div class="t" style="left:1743px;top:241px;font-size:15.6px;color:#444;">Indonesia</div>
<div class="a" style="left:1724px;top:262px;width:14px;height:14px;background:#2b9bb6;"></div>
<div class="t" style="left:1743px;top:262px;font-size:15.6px;color:#444;">Laos</div>
<div class="a" style="left:1724px;top:283px;width:14px;height:14px;background:#d4ac22;"></div>
<div class="t" style="left:1743px;top:283px;font-size:15.6px;color:#444;">Malaysia</div>
<div class="a" style="left:1724px;top:304px;width:14px;height:14px;background:#a19ace;"></div>
<div class="t" style="left:1743px;top:304px;font-size:15.6px;color:#444;">Myanmar</div>
<div class="a" style="left:1724px;top:325px;width:14px;height:14px;background:#8fd3bf;"></div>
<div class="t" style="left:1743px;top:325px;font-size:15.6px;color:#444;">Philippines</div>
<div class="a" style="left:1724px;top:346px;width:14px;height:14px;background:#8d9697;"></div>
<div class="t" style="left:1743px;top:346px;font-size:15.6px;color:#444;">Thailand</div>
<div class="a" style="left:1724px;top:367px;width:14px;height:14px;background:#b99c93;"></div>
<div class="t" style="left:1743px;top:367px;font-size:15.6px;color:#444;">Vietnam</div><div class="t lbl" style="right:1189px;top:454px;color:#8ecbb6;">Philippines</div>
<div class="t lbl" style="right:1189px;top:599px;color:#8d95a0;">Thailand</div>
<div class="t lbl" style="right:1189px;top:773px;color:#c9ab3c;">Malaysia</div>
<div class="t lbl" style="right:1232px;top:798px;color:#cfc79a;">Cambodia</div>
<div class="t lbl" style="right:1014px;top:439px;color:#9d98c4;">Myanmar</div>
<div class="t lbl" style="right:1014px;top:656px;color:#8d95a0;">Thailand</div>
<div class="t lbl" style="right:1014px;top:774px;color:#6fae94;">Indonesia</div>
<div class="t lbl" style="left:774.5px;width:120px;text-align:center;top:811px;color:#c9ab3c;">Malaysia</div>
<div class="t lbl" style="right:1086px;top:837.6px;color:#3b93ab;">Laos</div>
<div class="t lbl" style="right:1031px;top:837.6px;color:#b49e96;">Vietnam</div>
<div class="t lbl" style="right:841px;top:357px;color:#6fae94;">Indonesia</div>
<div class="t lbl" style="right:841px;top:412px;color:#8d95a0;">Thailand</div>
<div class="t lbl" style="right:841px;top:600.8px;color:#c9ab3c;">Malaysia</div>
<div class="t lbl" style="right:841px;top:702px;color:#b49e96;">Vietnam</div>
<div class="t lbl" style="right:841px;top:811px;color:#3b93ab;">Laos</div>
<div class="t lbl" style="right:667px;top:449px;color:#6fae94;">Indonesia</div>
<div class="t lbl" style="right:667px;top:799px;color:#b49e96;">Vietnam</div>
<div class="t lbl" style="left:1094px;width:120px;text-align:center;top:811px;color:#3b93ab;">Laos</div>
<div class="t lbl" style="right:492px;top:497px;color:#9d98c4;">Myanmar</div>
<div class="t lbl" style="right:492px;top:615px;color:#dcd39c;">Malaysia</div>
<div class="t lbl" style="right:493px;top:773.7px;color:#b49e96;">Vietnam</div>
<div class="t lbl" style="right:492px;top:837.6px;color:#3b93ab;">Laos</div>
<div class="t lbl" style="right:319px;top:416.5px;color:#8ecbb6;">Philippines</div>
<div class="t lbl" style="right:319px;top:453px;color:#9d98c4;">Myanmar</div>
<div class="t lbl" style="right:319px;top:609px;color:#8d95a0;">Thailand</div>
<div class="t lbl" style="left:1499px;width:120px;text-align:center;top:773.7px;color:#3b93ab;">Laos</div>
<div class="t" style="left:562px;top:569.8px;font-size:15.8px;color:#666;background:rgba(255,255,255,0.6);">Median</div>
<div class="t" style="left:676px;top:569.8px;font-size:15.8px;color:#666;background:rgba(255,255,255,0.6);">Median</div>
<div class="t" style="left:736px;top:532.2px;font-size:15.8px;color:#666;background:rgba(255,255,255,0.6);">Median</div>
<div class="t" style="left:850px;top:532.2px;font-size:15.8px;color:#666;background:rgba(255,255,255,0.6);">Median</div>
<div class="t" style="left:910px;top:492.3px;font-size:15.8px;color:#666;background:rgba(255,255,255,0.6);">Median</div>
<div class="t" style="left:1024px;top:492.3px;font-size:15.8px;color:#666;background:rgba(255,255,255,0.6);">Median</div>
<div class="t" style="left:1084px;top:669.7px;font-size:15.8px;color:#666;background:rgba(255,255,255,0.6);">Median</div>
<div class="t" style="left:1198px;top:669.7px;font-size:15.8px;color:#666;background:rgba(255,255,255,0.6);">Median</div>
<div class="t" style="left:1258px;top:621.8px;font-size:15.8px;color:#666;background:rgba(255,255,255,0.6);">Median</div>
<div class="t" style="left:1372px;top:621.8px;font-size:15.8px;color:#666;background:rgba(255,255,255,0.6);">Median</div>
<div class="t" style="left:1432px;top:576.5px;font-size:15.8px;color:#666;background:rgba(255,255,255,0.6);">Median</div>
<div class="t" style="left:1546px;top:576.5px;font-size:15.8px;color:#666;background:rgba(255,255,255,0.6);">Median</div>
<!-- bottom tabs -->
<div class="a" style="left:0;top:967px;width:1920px;height:38px;background:#e6e6e6;border-top:1px solid #d8d8d8;"></div>
<div class="tab" style="left:0;width:163px;padding-left:25px;top:967px;line-height:39px;">Data Source</div>
<svg style="left:11px;top:979px" width="8" height="12" viewBox="0 0 8 12"><ellipse cx="4" cy="2" rx="3.3" ry="1.4" fill="none" stroke="#666"/><path d="M0.7 2v8c0 .8 1.5 1.4 3.3 1.4s3.3-.6 3.3-1.4V2M0.7 6c0 .8 1.5 1.4 3.3 1.4S7.3 6.8 7.3 6" fill="none" stroke="#666"/></svg>
<div class="tab" style="left:163px;width:47px;padding-left:7px;top:967px;line-height:39px;">Map</div>
<div class="tab" style="left:210px;width:132px;padding-left:6px;top:967px;line-height:39px;">EventTimeChart</div>
<div class="tab" style="left:342px;width:124px;padding-left:6px;top:967px;line-height:39px;">SubEventChart</div>
<div class="tab" style="left:466px;width:80px;padding-left:6px;top:967px;line-height:39px;">Interaction</div>
<div class="tab" style="left:762px;width:117px;padding-left:0;top:967px;line-height:39px;overflow:hidden;"><span style="margin-left:-7px">ableNumDetails</span></div>
<div class="tab" style="left:879px;width:126px;padding-left:6px;top:967px;line-height:39px;">PropEventTime</div>
<div class="tab" style="left:1005px;width:89px;padding-left:6px;top:967px;line-height:37px;background:#fff;color:#333;font-weight:bold;font-size:15px;">LineGraph</div>
<div class="tab" style="left:1094px;width:32px;top:967px;"></div>
<div class="tab" style="left:1126px;width:32px;top:967px;"></div>
<div class="tab" style="left:1158px;width:32px;top:967px;"></div>
<svg style="left:1102px;top:977px" width="17" height="17" viewBox="0 0 17 17"><path d="M1 1h11v11H1z" fill="none" stroke="#666" stroke-width="1.1"/><path d="M4 10V7M6.5 10V4.5M9 10V6" stroke="#666" stroke-width="1.1"/><path d="M12.5 9v7.5M8.8 12.8h7.5" stroke="#333" stroke-width="1.8"/></svg>
<svg style="left:1134px;top:977px" width="17" height="17" viewBox="0 0 17 17"><path d="M1 1h11v11H1zM1 6.5h11M6.5 1v11" fill="none" stroke="#666" stroke-width="1.1"/><path d="M12.5 9v7.5M8.8 12.8h7.5" stroke="#333" stroke-width="1.8"/></svg>
<svg style="left:1166px;top:977px" width="17" height="17" viewBox="0 0 17 17"><path d="M1 1.5l4 1 3-1 4 1V12l-4-1-3 1-4-1z" fill="none" stroke="#666" stroke-width="1.1"/><path d="M12.5 9v7.5M8.8 12.8h7.5" stroke="#333" stroke-width="1.8"/></svg>
<!-- status bar -->
<div class="a" style="left:0;top:1004px;width:1920px;height:26px;background:#e8e8e8;border-top:1px solid #d4d4d4;"></div>
<div class="t" style="left:3px;top:1010px;font-size:13.4px;color:#333;">452 marks</div>
<div class="t" style="left:86px;top:1010px;font-size:13.4px;color:#333;">1 row by 36 columns</div>
<div class="t" style="left:228px;top:1010px;font-size:13.4px;color:#333;">SUM(NumberRecord): 28,385</div>
<div class="a" style="left:1501px;top:1005px;width:1px;height:25px;background:#d0d0d0;"></div>
<div class="a" style="left:1658px;top:1005px;width:1px;height:25px;background:#d0d0d0;"></div>
<div class="a" style="left:1690px;top:1005px;width:1px;height:25px;background:#d0d0d0;"></div>
<div class="a" style="left:1722px;top:1005px;width:1px;height:25px;background:#d0d0d0;"></div>
<div class="a" style="left:1779px;top:1005px;width:1px;height:25px;background:#d0d0d0;"></div>
<div class="a" style="left:1850px;top:1005px;width:1px;height:25px;background:#d0d0d0;"></div>
<svg style="left:1508px;top:1010px" width="11" height="14" viewBox="0 0 11 14"><circle cx="5.5" cy="4" r="3" fill="none" stroke="#555" stroke-width="1.1"/><path d="M1 13v-2.5C1 9 3 8 5.5 8S10 9 10 10.5V13z" fill="none" stroke="#555" stroke-width="1.1"/></svg>
<div class="t" style="left:1527px;top:1010px;font-size:13px;color:#333;">Tan Wei Li Ama...</div>
<svg style="left:1640px;top:1015px" width="9" height="5"><path d="M0 0h9L4.5 5z" fill="#111"/></svg>
<svg style="left:1787px;top:1012px" width="60" height="10" viewBox="0 0 60 10"><g fill="#c0c0c0"><rect x="0" y="1" width="1.2" height="8"/><path d="M8 1v8L3 5z"/><path d="M21 1v8l-5-4z"/><path d="M35 1v8l5-4z"/><path d="M48 1v8l5-4z"/><rect x="54" y="1" width="1.2" height="8"/></g></svg>
<svg style="left:1859px;top:1011px" width="54" height="12" viewBox="0 0 54 12"><g fill="#b0b0b0"><rect x="0" y="0" width="2.5" height="2.5"/><rect x="4" y="0" width="2.5" height="2.5"/><rect x="8" y="0" width="2.5" height="2.5"/><rect x="0" y="4" width="2.5" height="2.5"/><rect x="4" y="4" width="2.5" height="2.5"/><rect x="8" y="4" width="2.5" height="2.5"/><rect x="0" y="8" width="2.5" height="2.5"/><rect x="4" y="8" width="2.5" height="2.5"/><rect x="8" y="8" width="2.5" height="2.5"/><rect x="21" y="0" width="11" height="7"/><rect x="21" y="8.5" width="3" height="2.5"/><rect x="25" y="8.5" width="3" height="2.5"/><rect x="29" y="8.5" width="3" height="2.5"/></g><rect x="43" y="0" width="11" height="11" fill="#777"/></svg>
<!-- context menu 1 -->
<div class="a" style="left:307px;top:566px;width:240px;height:382px;background:#f0f0f0;border:1px solid #cfcfcf;box-shadow:3px 3px 4px rgba(0,0,0,0.28);"></div>
<div class="mi" style="left:344px;top:574px;">Filter...</div>
<div class="sep" style="left:340px;top:597px;width:203px;"></div>
<div class="mi" style="left:344px;top:606px;">Show Filter</div>
<div class="sep" style="left:340px;top:629px;width:203px;"></div>
<div class="mi" style="left:344px;top:639px;">Format...</div>
<div class="a" style="left:310px;top:658px;width:24px;height:24px;background:#91c8f6;"></div>
<svg style="left:315px;top:664px" width="14" height="12" viewBox="0 0 14 12"><path d="M1.5 6.5l3.5 3.5 7.5-8" fill="none" stroke="#222" stroke-width="1.6"/></svg>
<div class="mi" style="left:344px;top:663px;">Include in Tooltip</div>
<div class="sep" style="left:340px;top:686px;width:203px;"></div>
<div class="mi" style="left:344px;top:696px;">Dimension</div>
<div class="mi" style="left:344px;top:720px;">Attribute</div>
<div class="a" style="left:310px;top:739px;width:24px;height:24px;background:#91c8f6;"></div>
<svg style="left:317px;top:746px" width="10" height="10"><circle cx="5" cy="5" r="4" fill="#222"/></svg>
<div class="mi" style="left:344px;top:744px;">Measure (Sum)</div>
<svg style="left:527px;top:746px" width="5" height="9"><path d="M0 0l5 4.5L0 9z" fill="#111"/></svg>
<div class="sep" style="left:340px;top:767px;width:203px;"></div>
<div class="mi" style="left:344px;top:777px;">Discrete</div>
<div class="a" style="left:310px;top:796px;width:24px;height:24px;background:#91c8f6;"></div>
<svg style="left:317px;top:803px" width="10" height="10"><circle cx="5" cy="5" r="4" fill="#222"/></svg>
<div class="mi" style="left:344px;top:801px;">Continuous</div>
<div class="sep" style="left:340px;top:824px;width:203px;"></div>
<div class="mi" style="left:344px;top:834px;font-weight:bold;">Edit in Shelf</div>
<div class="sep" style="left:340px;top:857px;width:203px;"></div>
<svg style="left:314px;top:868px" width="14" height="13" viewBox="0 0 14 13"><path d="M7 1.5L12.8 12H1.2z" fill="none" stroke="#333" stroke-width="1.5"/></svg>
<div class="mi" style="left:344px;top:868px;">Add Table Calculation...</div>
<div class="a" style="left:310px;top:889px;width:231px;height:23px;background:#91c8f6;"></div>
<div class="mi" style="left:344px;top:893px;">Quick Table Calculation</div>
<svg style="left:527px;top:896px" width="5" height="9"><path d="M0 0l5 4.5L0 9z" fill="#111"/></svg>
<div class="sep" style="left:340px;top:917px;width:203px;"></div>
<div class="mi" style="left:344px;top:926px;">Remove</div>
<!-- submenu -->
<div class="a" style="left:541px;top:811px;width:221px;height:230px;background:#f0f0f0;border:1px solid #cfcfcf;box-shadow:3px 3px 4px rgba(0,0,0,0.28);"></div>
<div class="mi" style="left:577px;top:818px;">Running Total</div>
<div class="mi" style="left:577px;top:842px;">Difference</div>
<div class="mi" style="left:577px;top:866px;">Percent Difference</div>
<div class="a" style="left:543px;top:885px;width:215px;height:24px;background:#91c8f6;"></div>
<div class="mi" style="left:577px;top:890px;">Percent of Total</div>
<div class="mi" style="left:577px;top:914px;">Rank</div>
<div class="mi" style="left:577px;top:938px;">Percentile</div>
<div class="mi" style="left:577px;top:962px;">Moving Average</div>
<div class="mi" style="left:577px;top:986px;color:#9a9a9a;">YTD Total</div>
<div class="mi" style="left:577px;top:1010px;">Compound Growth Rate</div>
<!-- annotations -->
<svg style="left:0;top:0" width="1920" height="1030">
<path d="M275.6 533.7 C273 545 270 562 269.4 575 C270 578 272 578.7 280 578.7 L450 578.5 C456 578 458 575 459 572 L466 541.5 C466 539.5 464 539.3 458 539.3 C420 540 370 545 300 545 L270 544.7" fill="none" stroke="#0a0a0a" stroke-width="3.2" stroke-linecap="round" stroke-linejoin="round"/>
<path d="M718.7 896.5 L841.6 896.5" fill="none" stroke="#0a0a0a" stroke-width="3.2" stroke-linecap="round"/>
<path d="M740 884.4 C725 887 713 891 711 896.5 C713 903 726 908 740 912.8" fill="none" stroke="#0a0a0a" stroke-width="3.2" stroke-linecap="round"/>
</svg>

</body></html>
